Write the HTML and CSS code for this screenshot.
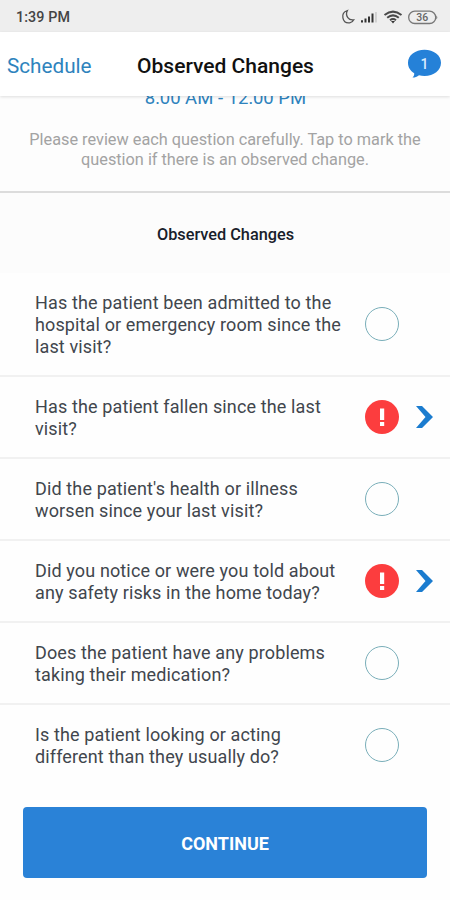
FILE: index.html
```html
<!DOCTYPE html>
<html lang="en">
<head>
<meta charset="utf-8">
<title>Observed Changes</title>
<link rel="stylesheet" href="styles.css">
</head>
<body>
<div class="status">
  <span class="clock">1:39 PM</span>
  <svg class="status-icons" width="98" height="18" viewBox="0 0 98 18" fill="none">
    <path d="M6.400 2.500C2.900 3.600 1.300 6.600 1.900 9.800 2.600 13.500 5.500 15.200 8.700 14.800 10.700 14.500 12.100 13.300 12.800 11.800 10.400 12.200 8.200 11.600 6.800 9.600 5.200 7.300 5.200 4.700 6.400 2.500Z" stroke="#555" stroke-width="1.300"/>
    <path d="M20 12.200h2v2.300h-2zM23.500 10.500h2v4h-2zM27 8.500h2v6h-2zM30.500 5.500h2v9h-2z" fill="#333"/>
    <path d="M34.200 4h1.500v10.500h-1.500z" fill="#c8c8c8"/>
    <path d="M43.500 7Q52 .2 60.500 7M46.200 9.700Q52 5 57.800 9.700M49 12.200Q52 9.800 55 12.200" stroke="#4a4a4a" stroke-width="2"/>
    <path d="M50 13h4L52 15.500Z" fill="#333"/>
    <rect x="67.700" y="3.200" width="27" height="12.300" rx="6.100" stroke="#777" stroke-width="1.300"/>
    <path d="M95.300 7.500q2 2 0 4z" fill="#777"/>
    <text x="81.200" y="13" class="battery" text-anchor="middle">36</text>
  </svg>
</div>
<header class="header">
  <a class="back">Schedule</a>
  <h1 class="title">Observed Changes</h1>
  <svg class="bubble" width="34" height="30" viewBox="0 0 34 30">
    <path d="M17.500 .8C26.800 .8 34 6.300 34 13.800S26.800 27 17.500 27C15.500 27 13.700 26.800 12 26.300 10 28 8.200 28.600 5.500 28.600 7 27.200 7.300 25.800 7.200 24.200 3.300 21.900 1 18.300 1 13.800 1 6.300 8.200 .8 17.500 .8Z" fill="#2581d8"/>
    <text x="17.500" y="19.500" class="count" text-anchor="middle">1</text>
  </svg>
</header>
<section class="intro">
  <div class="time"><span>8:00 AM - 12:00 PM</span></div>
  <p class="hint">Please review each question carefully. Tap to mark the<br>question if there is an observed change.</p>
</section>
<h2 class="section-title">Observed Changes</h2>
<ul class="questions">
  <li class="row tall"><p>Has the patient been admitted to the<br>hospital or emergency room since the<br>last visit?</p><i class="ring"></i></li>
  <li class="row"><p>Has the patient fallen since the last<br>visit?</p>
    <svg class="alert" width="34" height="34" viewBox="0 0 34 34"><circle cx="17" cy="17" r="17" fill="#fc3d3e"/><path d="M15 8.500h4.200v11.500H15zM15 22h4.200v4H15z" fill="#fff"/></svg>
    <svg class="chevron" width="17" height="22" viewBox="0 0 17 22"><path d="M0 0H6L17 11 6 22H0L9.500 11Z" fill="#1b7ccf"/></svg></li>
  <li class="row"><p>Did the patient's health or illness<br>worsen since your last visit?</p><i class="ring"></i></li>
  <li class="row"><p>Did you notice or were you told about<br>any safety risks in the home today?</p>
    <svg class="alert" width="34" height="34" viewBox="0 0 34 34"><circle cx="17" cy="17" r="17" fill="#fc3d3e"/><path d="M15 8.500h4.200v11.500H15zM15 22h4.200v4H15z" fill="#fff"/></svg>
    <svg class="chevron" width="17" height="22" viewBox="0 0 17 22"><path d="M0 0H6L17 11 6 22H0L9.500 11Z" fill="#1b7ccf"/></svg></li>
  <li class="row"><p>Does the patient have any problems<br>taking their medication?</p><i class="ring"></i></li>
  <li class="row"><p>Is the patient looking or acting<br>different than they usually do?</p><i class="ring"></i></li>
</ul>
<button class="continue">CONTINUE</button>
</body>
</html>
```
FILE: styles.css
```css
* { box-sizing: border-box; margin: 0; padding: 0; }
body { width: 450px; height: 900px; overflow: hidden; background: #fefefe; font-family: Roboto, sans-serif; display: flex; flex-direction: column; }
.status { flex: none; height: 32px; background: #eee; display: flex; align-items: center; justify-content: space-between; padding: 1px 11px 0 16px; }
.clock { font-size: 14.300px; font-weight: 500; letter-spacing: .1px; color: #444; }
.battery { font-size: 10.500px; font-weight: 500; fill: #666; }
.header { flex: none; height: 64px; background: #fff; display: grid; grid-template-columns: 100px 1fr 100px; align-items: center; padding: 3px 9px 0 7px; box-shadow: 0 1px 3px rgba(0,0,0,.13); z-index: 1; }
.back { font-size: 20.700px; color: #2e83bd; }
.title { font-size: 21px; font-weight: 500; text-align: center; color: #111; white-space: nowrap; padding-left: 3px; }
.bubble { justify-self: end; margin-top: -3px; }
.count { font-size: 14px; font-weight: 500; fill: #d8ecff; }
.intro { flex: none; height: 97px; border-bottom: 2px solid #dcdcdc; background: #fdfdfd; text-align: center; overflow: hidden; }
.time { height: 12px; display: flex; align-items: flex-end; justify-content: center; font-size: 18.500px; line-height: 20px; color: #2e83bd; padding-left: 1px; }
.hint { margin-top: 22px; font-size: 16.300px; line-height: 19.500px; color: #a3a3a3; }
.section-title { flex: none; height: 80px; background: #fcfcfc; display: flex; align-items: center; justify-content: center; font-size: 16.300px; font-weight: 500; color: #18202a; padding: 2px 0 0 1px; }
.questions { list-style: none; }
.row { height: 81.900px; border-bottom: 2px solid #f1f1f1; display: flex; align-items: center; padding-left: 35px; }
.row.tall { height: 104px; }
.row:last-child { border-bottom: 0; height: 80px; }
.row p { width: 330px; padding-top: 2px; font-size: 18px; line-height: 21.700px; letter-spacing: .13px; color: #41464d; white-space: nowrap; }
.ring { width: 34px; height: 34px; border: 1.500px solid #79aeb9; border-radius: 50%; }
.chevron { margin-left: 17px; }
.continue { flex: none; margin: 22px 23px 0; width: 404px; height: 71px; border: 0; border-radius: 4px; background: #2a82d7; color: #fff; font: 700 18px Roboto, sans-serif; padding-top: 2px; }
```
